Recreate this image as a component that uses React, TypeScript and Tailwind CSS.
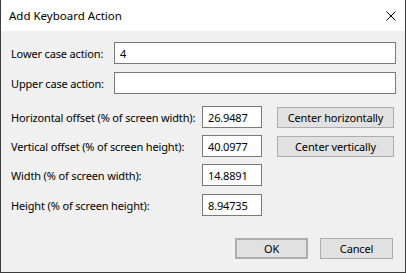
import React from 'react';

const font = { fontFamily: '"Noto Sans", "Open Sans", sans-serif' };

const Field: React.FC<{ value?: string; className?: string }> = ({ value = '', className = '' }) => (
  <div className={`h-[22px] shrink-0 border border-[#7a7a7a] bg-white pl-[5px] flex items-center text-[11px] tracking-[-0.15px] leading-none text-black ${className}`}>
    {value}
  </div>
);

const Btn: React.FC<{ label: string; className?: string }> = ({ label, className = '' }) => (
  <div className={`h-[21px] shrink-0 flex items-center justify-center bg-[#e1e1e1] border border-[#adadad] text-[11px] tracking-[-0.15px] leading-none whitespace-nowrap text-black ${className}`}>
    {label}
  </div>
);

const Row: React.FC<{ className: string; children: React.ReactNode }> = ({ className, children }) => (
  <div className={`flex items-start h-[22px] ${className}`}>{children}</div>
);

const Label: React.FC<{ w: string; children: React.ReactNode }> = ({ w, children }) => (
  <span className={`${w} h-[22px] flex items-center shrink-0 whitespace-nowrap`}>{children}</span>
);

const App: React.FC = () => {
  return (
    <div style={font} className="w-[406px] h-[273px] overflow-hidden flex flex-col bg-[#f0f0f0] border-l border-r border-b border-[#3c3c3c] text-black">
      {/* title bar */}
      <div className="h-[31px] bg-white flex items-center justify-between pl-[8px] pr-[9px] shrink-0">
        <span className="text-[11.5px] leading-none whitespace-nowrap">Add Keyboard Action</span>
        <svg width="10" height="10" viewBox="0 0 10 10">
          <path d="M0.5 0.5 L9.5 9.5 M9.5 0.5 L0.5 9.5" stroke="#000" strokeWidth="1" />
        </svg>
      </div>

      <div className="flex flex-col pl-[10px] pr-[9px] text-[11px] tracking-[-0.15px] leading-none">
        <Row className="mt-[11px]">
          <Label w="w-[103px]">Lower case action:</Label>
          <Field value="4" className="flex-1" />
        </Row>
        <Row className="mt-[8px]">
          <Label w="w-[103px]">Upper case action:</Label>
          <Field className="flex-1" />
        </Row>

        <Row className="mt-[12px]">
          <Label w="w-[191px]">Horizontal offset (% of screen width):</Label>
          <Field value="26.9487" className="w-[60px]" />
          <Btn label="Center horizontally" className="w-[117px] ml-[15px] mt-[1px]" />
        </Row>
        <Row className="mt-[7px]">
          <Label w="w-[191px]">Vertical offset (% of screen height):</Label>
          <Field value="40.0977" className="w-[60px]" />
          <Btn label="Center vertically" className="w-[117px] ml-[15px] mt-[1px]" />
        </Row>
        <Row className="mt-[7px]">
          <Label w="w-[191px]">Width (% of screen width):</Label>
          <Field value="14.8891" className="w-[60px]" />
        </Row>
        <Row className="mt-[8px]">
          <Label w="w-[191px]">Height (% of screen height):</Label>
          <Field value="8.94735" className="w-[60px]" />
        </Row>
      </div>

      <div className="flex justify-end gap-[12px] mt-[22px] pr-[12px]">
        <Btn label="OK" className="w-[73px] border-2 border-[#0078d7]" />
        <Btn label="Cancel" className="w-[73px]" />
      </div>
    </div>
  );
};

export default App;
